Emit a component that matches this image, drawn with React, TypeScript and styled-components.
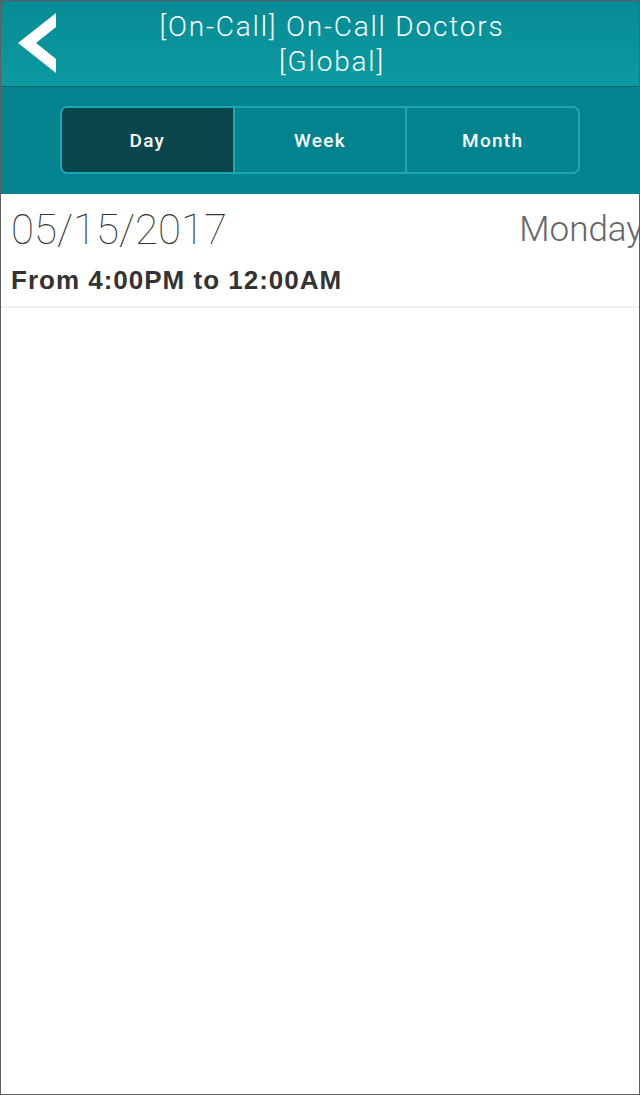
import React, { useState } from "react";
import styled, { createGlobalStyle } from "styled-components";

const GlobalStyle = createGlobalStyle`
  html, body {
    margin: 0;
    padding: 0;
    background: #ffffff;
  }
  * {
    box-sizing: border-box;
  }
`;

const tabs = ["Day", "Week", "Month"];

const App = () => {
  const [active, setActive] = useState("Day");

  return (
    <>
      <GlobalStyle />
      <Screen>
        <Header>
          <BackButton aria-label="Back">
            <svg width="42" height="62" viewBox="0 0 42 62">
              <polygon points="2,30 40,0 40,14 20,30 40,46 40,60" fill="#ffffff" />
            </svg>
          </BackButton>
          <Title>
            [On-Call] On-Call Doctors
            <br />
            [Global]
          </Title>
        </Header>
        <TabBar>
          <Segments>
            {tabs.map((tab) => (
              <Segment key={tab} $active={tab === active} onClick={() => setActive(tab)}>
                {tab}
              </Segment>
            ))}
          </Segments>
        </TabBar>
        <ShiftRow>
          <DateLine>
            <DateText>05/15/2017</DateText>
            <DayName>Monday</DayName>
          </DateLine>
          <TimeRange>From 4:00PM to 12:00AM</TimeRange>
        </ShiftRow>
      </Screen>
    </>
  );
};

export default App;

const Screen = styled.div`
  display: flex;
  flex-direction: column;
  width: 640px;
  height: 1095px;
  border: 1px solid #5f5f5f;
  overflow: hidden;
  background: #ffffff;
`;

const Header = styled.div`
  position: relative;
  display: flex;
  justify-content: center;
  align-items: center;
  height: 86px;
  padding-left: 24px;
  background: linear-gradient(#078b94, #0c9aa1);
  border-bottom: 1px solid #05656c;
`;

const BackButton = styled.button`
  position: absolute;
  left: 15px;
  top: 12px;
  padding: 0;
  border: none;
  background: none;
  cursor: pointer;
`;

const Title = styled.div`
  color: #ffffff;
  font-family: Roboto, "Noto Sans", sans-serif;
  font-size: 28px;
  font-weight: 300;
  letter-spacing: 1.8px;
  line-height: 35px;
  text-align: center;
`;

const TabBar = styled.div`
  display: flex;
  justify-content: center;
  padding: 19px 0 20px;
  background: #02838d;
`;

const Segments = styled.div`
  display: flex;
  width: 520px;
  height: 68px;
  border: 2px solid #1aa9b4;
  border-radius: 7px;
  overflow: hidden;
`;

const Segment = styled.div<{ $active: boolean }>`
  display: flex;
  flex: 1;
  justify-content: center;
  align-items: center;
  background: ${({ $active }) => ($active ? "#0b464d" : "transparent")};
  color: #ffffff;
  font-family: Roboto, "Noto Sans", sans-serif;
  font-size: 19px;
  font-weight: 500;
  letter-spacing: 1.3px;
  cursor: pointer;

  & + & {
    border-left: 2px solid #1aa9b4;
  }
`;

const ShiftRow = styled.div`
  display: flex;
  flex-direction: column;
  padding: 12px 0 10px 10px;
  border-bottom: 2px solid #f0f0f0;
`;

const DateLine = styled.div`
  display: flex;
  justify-content: space-between;
  align-items: baseline;
  margin-right: -4px;
`;

const DateText = styled.div`
  color: #333333;
  font-family: Roboto, "Liberation Sans", sans-serif;
  font-size: 42px;
  font-weight: 100;
  line-height: 48px;
`;

const DayName = styled.div`
  position: relative;
  top: -3px;
  color: #666666;
  font-family: Roboto, "Liberation Sans", sans-serif;
  font-size: 35px;
  font-weight: 300;
`;

const TimeRange = styled.div`
  margin-top: 10px;
  color: #333333;
  font-family: "Liberation Sans", Arial, sans-serif;
  font-size: 26px;
  font-weight: 700;
  letter-spacing: 1px;
  line-height: 32px;
`;
